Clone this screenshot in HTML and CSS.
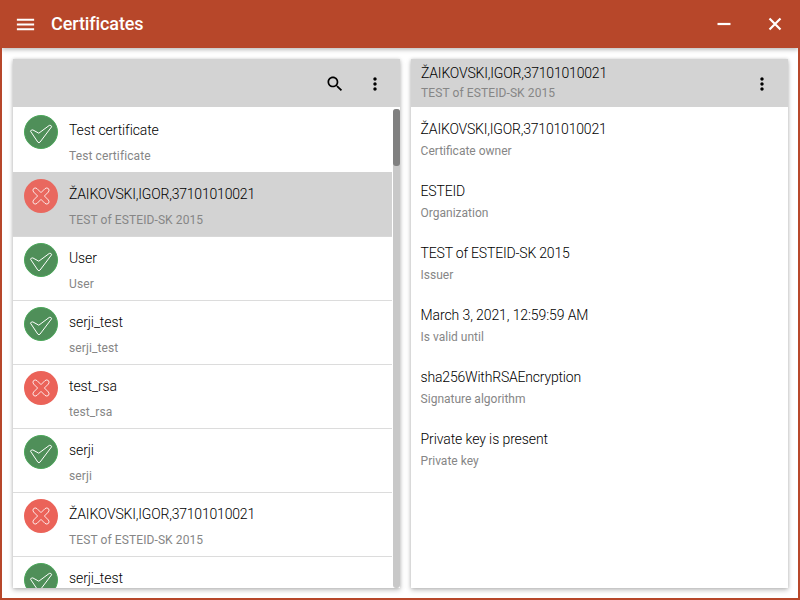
FILE: index.html
```
<!DOCTYPE html>
<html lang="en">
<head>
<meta charset="utf-8">
<title>Certificates</title>
<link rel="stylesheet" href="styles.css">
</head>
<body>
<svg class="defs" width="0" height="0">
  <symbol id="ok" viewBox="0 0 34 34">
    <circle cx="17" cy="17" r="16.5" fill="#4f8f59" stroke="#4ba85a"/>
    <path d="M6.5 16.2Q7.1 14.6 8.8 14.9L14.8 18.2L25.3 10.4Q27.3 9.8 27.6 11.8L16.1 27Q15 28.4 13.8 27.1Z" fill="none" stroke="#fff" stroke-width="1" stroke-linejoin="round"/>
  </symbol>
  <symbol id="bad" viewBox="0 0 34 34">
    <circle cx="17" cy="17" r="17" fill="#eb6359"/>
    <path transform="translate(17 17)" d="M0-3.4L4-7.4Q6-8.8 7.4-7.4Q8.8-6 7.4-4L3.4 0L7.4 4Q8.8 6 7.4 7.4Q6 8.8 4 7.4L0 3.4L-4 7.4Q-6 8.8-7.4 7.4Q-8.8 6-7.4 4L-3.4 0L-7.4-4Q-8.8-6-7.4-7.4Q-6-8.8-4-7.4Z" fill="none" stroke="#fff" stroke-opacity=".85" stroke-width="1"/>
  </symbol>
  <symbol id="more" viewBox="0 0 24 24"><path d="M12 8c1.1 0 2-.9 2-2s-.9-2-2-2-2 .9-2 2 .9 2 2 2zm0 2c-1.1 0-2 .9-2 2s.9 2 2 2 2-.9 2-2-.9-2-2-2zm0 6c-1.1 0-2 .9-2 2s.9 2 2 2 2-.9 2-2-.9-2-2-2z"/></symbol>
</svg>
<div class="window">
  <header class="bar">
    <svg class="menu" viewBox="0 0 24 24"><path d="M3 18h18v-2H3v2zm0-5h18v-2H3v2zm0-7v2h18V6H3z"/></svg>
    <h1>Certificates</h1>
    <svg class="min" viewBox="0 0 14 14"><path d="M.5 7h13" /></svg>
    <svg class="close" viewBox="0 0 14 14"><path d="M1.5 1.5l11 11M12.500 1.500l-11 11"/></svg>
  </header>
  <main>
    <section class="panel">
      <div class="tools">
        <svg class="search" viewBox="0 0 24 24"><path d="M15.500 14h-.79l-.28-.27C15.410 12.590 16 11.110 16 9.500 16 5.910 13.090 3 9.500 3S3 5.910 3 9.500 5.910 16 9.500 16c1.610 0 3.090-.59 4.230-1.570l.27.28v.79l5 4.990L20.490 19l-4.990-5zm-6 0C7.010 14 5 11.990 5 9.500S7.010 5 9.500 5 14 7.010 14 9.500 11.990 14 9.500 14z"/></svg>
        <svg class="more"><use href="#more"/></svg>
      </div>
      <div class="body">
        <ul class="list">
          <li><svg><use href="#ok"/></svg><div><b>Test certificate</b><i>Test certificate</i></div></li>
          <li class="active"><svg><use href="#bad"/></svg><div><b class="tight">ŽAIKOVSKI,IGOR,37101010021</b><i>TEST of ESTEID-SK 2015</i></div></li>
          <li><svg><use href="#ok"/></svg><div><b>User</b><i>User</i></div></li>
          <li><svg><use href="#ok"/></svg><div><b>serji_test</b><i>serji_test</i></div></li>
          <li><svg><use href="#bad"/></svg><div><b>test_rsa</b><i>test_rsa</i></div></li>
          <li><svg><use href="#ok"/></svg><div><b>serji</b><i>serji</i></div></li>
          <li><svg><use href="#bad"/></svg><div><b class="tight">ŽAIKOVSKI,IGOR,37101010021</b><i>TEST of ESTEID-SK 2015</i></div></li>
          <li><svg><use href="#ok"/></svg><div><b>serji_test</b></div></li>
        </ul>
        <div class="track"><div class="thumb"></div></div>
      </div>
    </section>
    <section class="panel">
      <div class="tools info">
        <div class="heading"><b class="tight">ŽAIKOVSKI,IGOR,37101010021</b><i>TEST of ESTEID-SK 2015</i></div>
        <svg class="more"><use href="#more"/></svg>
      </div>
      <div class="details">
        <div><b class="tight">ŽAIKOVSKI,IGOR,37101010021</b><i>Certificate owner</i></div>
        <div><b class="tight">ESTEID</b><i>Organization</i></div>
        <div><b class="tight">TEST of ESTEID-SK 2015</b><i>Issuer</i></div>
        <div><b>March 3, 2021, 12:59:59 AM</b><i>Is valid until</i></div>
        <div><b class="tight">sha256WithRSAEncryption</b><i>Signature algorithm</i></div>
        <div><b>Private key is present</b><i>Private key</i></div>
      </div>
    </section>
  </main>
</div>
</body>
</html>
```
FILE: styles.css
```
* { box-sizing: border-box; }
body { margin: 0; font-family: Roboto, sans-serif; }
.defs { position: absolute; }
.window {
  width: 800px; height: 600px; overflow: hidden;
  display: flex; flex-direction: column;
  border: 2px solid #b7472a; border-top: 0; background: #fff;
}
.bar {
  height: 48px; flex: none; display: flex; align-items: center;
  padding: 0 16.500px 0 12px; background: #b7472a; color: #fff;
  box-shadow: 0 2px 4px rgba(0,0,0,.25);
}
.bar h1 { margin: 0 auto 0 14px; font-size: 18px; font-weight: 500; line-height: 24px; letter-spacing: -.1px; }
.menu { width: 23px; height: 23px; fill: #fff; }
.min, .close { width: 14px; height: 14px; fill: none; stroke: #fff; stroke-width: 2.200; }
.min { margin-right: 37px; }
main { flex: 1; min-height: 0; display: flex; gap: 11px; padding: 11px 10px 10px 11px; }
.panel {
  width: 387px; display: flex; flex-direction: column; background: #fff;
  box-shadow: 0 2px 5px rgba(0,0,0,.26), 0 0 3px rgba(0,0,0,.12);
}
.panel + .panel { width: 377px; }
.tools { height: 48px; flex: none; display: flex; align-items: center; justify-content: flex-end; background: #d3d3d3; }
.search { width: 20px; height: 20px; margin: 2px 20px 0 0; }
.more { width: 20px; height: 20px; margin: 2px 15px 0 0; }
.info { justify-content: space-between; padding-left: 10px; }
.info .more { margin-right: 16px; }
.body { flex: 1; min-height: 0; display: flex; }
.list { flex: 1; margin: 0; padding: 2px 1px 0 0; list-style: none; overflow: hidden; }
.list li { height: 64px; display: flex; gap: 11px; padding: 6px 0 0 11px; border-bottom: 1px solid #dcdcdc; }
.list li svg { width: 34px; height: 34px; flex: none; }
.list li.active { background: #d3d3d3; border-color: #d8d8d8; }
.list li.active svg { opacity: .95; }
.list li:first-child { border-color: #d3d3d3; }
b, i { display: block; font-style: normal; white-space: nowrap; }
b { font-size: 14px; font-weight: 300; color: #000; line-height: 20px; letter-spacing: -.1px; }
.tight { letter-spacing: -.19px; }
i { font-size: 12px; font-weight: 400; color: #868686; line-height: 16px; }
.list li div { padding-top: 5px; }
.list li i { margin-top: 8px; }
.list li i, .heading i { letter-spacing: .1px; }
.track { width: 7px; margin-top: 2px; border-radius: 3px; background: #c8c8c8; }
.thumb { height: 57px; border-radius: 3px; background: #808080; }
.heading b, .heading i { line-height: 20px; }
.details { padding: 12px 0 0 9.600px; }
.details div { height: 62px; }
.details i { margin-top: 4px; }
```
